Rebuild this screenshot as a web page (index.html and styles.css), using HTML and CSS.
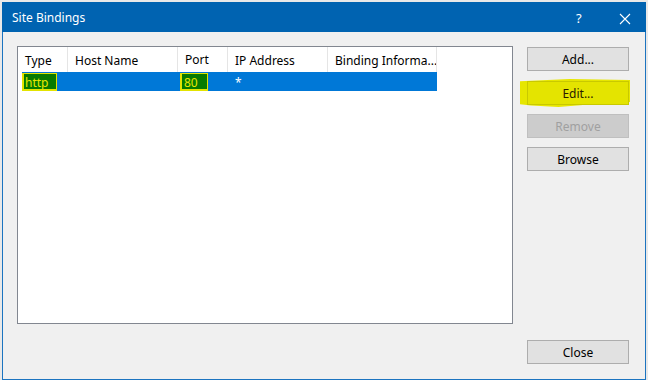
FILE: index.html
```html
<!DOCTYPE html>
<html>
<head>
<meta charset="utf-8">
<link rel="stylesheet" href="styles.css">
</head>
<body>
<div class="dialog">
  <div class="titlebar">
    <span class="title">Site Bindings</span>
    <span class="help">?</span>
    <svg class="close-x" width="12" height="12" viewBox="0 0 12 12"><path d="M1 1L11 11M11 1L1 11" stroke="#fff" stroke-width="1.1" fill="none"/></svg>
  </div>
  <div class="content">
    <div class="main">
      <div class="listbox">
        <div class="header">
          <div class="hcell c-type">Type</div>
          <div class="hcell c-host">Host Name</div>
          <div class="hcell c-port">Port</div>
          <div class="hcell c-ip">IP Address</div>
          <div class="hcell c-bind">Binding Informa...</div>
        </div>
        <div class="row selected">
          <div class="cell c-type1"><span class="mark mark-http">http</span></div>
          <div class="cell c-host"></div>
          <div class="cell c-port"><span class="mark mark-port">80</span></div>
          <div class="cell c-ip">*</div>
          <div class="cell c-bind"></div>
        </div>
      </div>
      <div class="buttons">
        <button class="btn">Add...</button>
        <div class="edit-wrap">
          <div class="blob"></div>
          <button class="btn btn-edit">Edit...</button>
        </div>
        <button class="btn btn-disabled">Remove</button>
        <button class="btn">Browse</button>
      </div>
    </div>
    <div class="footer">
      <button class="btn">Close</button>
    </div>
  </div>
</div>
</body>
</html>
```
FILE: styles.css
```css
html, body {
  margin: 0;
  padding: 0;
}
body {
  width: 648px;
  height: 380px;
  background: #e9e9e9;
  overflow: hidden;
  font-family: "Noto Sans", "Liberation Sans", sans-serif;
  font-size: 12px;
}
.dialog {
  margin: 2px 0 0 2px;
  width: 642px;
  height: 377px;
  border: 1px solid #1c74c0;
  border-top: none;
  background: #f0f0f0;
  display: flex;
  flex-direction: column;
}
.titlebar {
  height: 31px;
  margin: 0 -1px;
  background: #0063b1;
  color: #fff;
  display: flex;
  align-items: center;
  position: relative;
}
.title {
  margin-left: 10px;
  font-size: 12px;
  margin-top: 1px;
}
.help {
  position: absolute;
  left: 574px;
  top: 7px;
  font-size: 13px;
}
.close-x {
  position: absolute;
  left: 617px;
  top: 11px;
}
.content {
  padding: 14px 16px 15px 14px;
  display: flex;
  flex-direction: column;
  flex: 1;
}
.main {
  display: flex;
  gap: 14px;
}
.listbox {
  width: 494px;
  height: 276px;
  border: 1px solid #828790;
  background: #fff;
}
.header {
  display: flex;
  height: 25px;
}
.hcell {
  box-sizing: border-box;
  border-right: 1px solid #e5e5e5;
  padding-left: 7px;
  padding-top: 2px;
  line-height: 23px;
  color: #000;
  white-space: nowrap;
  overflow: hidden;
}
.c-type { width: 50px; }
.c-type1 { width: 46px; }
.c-host { width: 110px; }
.c-port { width: 50px; }
.c-ip { width: 100px; }
.c-bind { width: 109px; }
.row {
  display: flex;
  height: 19px;
  margin-left: 4px;
  width: 415px;
}
.selected {
  background: #0078d7;
  color: #fff;
}
.cell {
  box-sizing: border-box;
  padding-left: 7px;
  padding-top: 2px;
  line-height: 17px;
  white-space: nowrap;
}
.c-type1 { padding-left: 0; padding-top: 1px; }
.c-port { padding-top: 1px; }
.mark {
  display: inline-block;
  background: #067a00;
  color: #e8e800;
  border: 2px solid #e3e300;
  border-top-width: 1px;
  border-right-width: 1px;
  height: 15px;
  line-height: 17px;
  vertical-align: top;
}
.mark-http {
  padding: 0 8px 0 1px;
}
.mark-port {
  margin-left: -5px;
  padding: 0 9px 0 2px;
}
.buttons {
  display: flex;
  flex-direction: column;
  gap: 9px;
  padding-top: 1px;
}
.btn {
  width: 102px;
  height: 24px;
  box-sizing: border-box;
  background: #e1e1e1;
  border: 1px solid #adadad;
  font-family: inherit;
  font-size: 12px;
  color: #000;
  padding: 1px 0 0 0;
  margin: 0;
}
.edit-wrap {
  position: relative;
  width: 102px;
  height: 24px;
  margin-top: 1px;
}
.blob {
  position: absolute;
  left: -7px;
  top: -2px;
  width: 110px;
  height: 28px;
  background: #e6e600;
  clip-path: polygon(0 8%, 45% 0, 100% 4%, 100% 82%, 60% 92%, 35% 100%, 10% 95%, 0 90%);
}
.btn-edit {
  position: relative;
  background: #e4e400;
  border-color: #c9c900;
  color: #2a1a00;
}
.btn-disabled {
  background: #cccccc;
  border-color: #bfbfbf;
  color: #a0a0a0;
}
.footer {
  margin-top: 16px;
  display: flex;
  justify-content: flex-end;
}
```
